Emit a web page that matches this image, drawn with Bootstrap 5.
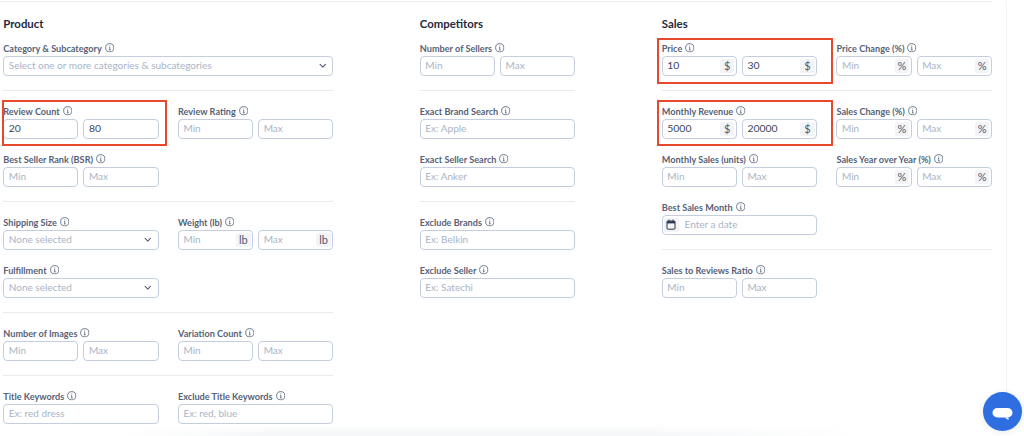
<!doctype html>
<html lang="en"><head><meta charset="utf-8">
<link href="https://cdn.jsdelivr.net/npm/bootstrap@5.3.0/dist/css/bootstrap.min.css" rel="stylesheet">
<style>
html,body{height:436px;overflow:hidden;background:#fff}
body{font-family:Lato,"Liberation Sans",sans-serif;position:relative}
.shell{height:397px;width:1007px;border-right:1px solid #f1f3f6}
.toprule{height:1px;width:992px;background:#edeff3;margin-top:1px}
.cols{padding-left:3.3px;gap:86.5px}
.stack{display:flex;flex-direction:column;gap:14px}
.w-wide{width:330px}.w-narrow{width:155.5px}
.head{font-size:11.4px;font-weight:700;color:#1f2a3d;line-height:11.5px;height:25.5px;padding-top:16.25px;box-sizing:border-box;margin:0}
.rule{height:1px;background:#e7eaef;margin:0;opacity:1;border:0}
.pair{display:flex;gap:19.4px}
.fld{width:155.3px;position:relative}
.fld-full{width:100%}
.lab{display:flex;align-items:center;gap:3px;height:12px;margin-bottom:2.5px;padding-top:1px;font-size:9.15px;font-weight:700;color:#556277;line-height:11px;white-space:nowrap}
.lab svg{width:9.5px;height:9.5px;flex:none}
.two{display:flex;gap:5px}
.box{flex:1 1 0;min-width:0;height:19.5px;border:1px solid #c5cede;border-radius:4px;background:#fff;display:flex;align-items:center;padding:0 1.5px 1px 4.5px;font-size:10px;color:#a9b4c6;line-height:1}
.box .val{color:#39455a;font-size:10.4px}
.box .txt{flex:1}
.unit{width:14.5px;height:14px;margin-bottom:-1px;border-radius:2px;background:#f2f4f7;color:#4d5a70;display:flex;align-items:center;justify-content:center;font-size:11px;flex:none}
.box-sel{padding-right:6px}
.box-date{padding-left:1px}
.box-date .unit{width:15.3px;margin-right:5.5px}
.redmark{position:absolute;border:2px solid #e8492c;pointer-events:none}
.mark-left{left:-1.5px;right:-8.5px;top:-4.5px;bottom:-7px}
.mark-sale-a{left:-4.5px;right:-15.5px;top:-4px;bottom:-8px}
.mark-sale-b{left:-4.5px;right:-15.5px;top:-4.5px;bottom:-7px}
.chat{position:absolute;left:982.5px;top:392px;width:39px;height:39px;border-radius:50%;background:#2f6ee0;display:flex;align-items:center;justify-content:center;box-shadow:0 1px 6px rgba(30,50,90,.12)}
.fadebar{position:absolute;left:120px;width:745px;bottom:0;height:11px;background:linear-gradient(to top,#f3f5f7,rgba(255,255,255,0));-webkit-mask-image:linear-gradient(to right,transparent,#000 20%,#000 70%,transparent);mask-image:linear-gradient(to right,transparent,#000 20%,#000 70%,transparent)}
</style></head><body>
<svg width="0" height="0" class="d-block position-absolute"><defs>
<symbol id="i-info" viewBox="0 0 12 12"><circle cx="6" cy="6" r="5.2" fill="none" stroke="#4d5a70" stroke-width="1"/><path d="M6 3.1v1M5.1 5.4H6v3.2M4.9 8.7h2.3" fill="none" stroke="#4d5a70" stroke-width="1"/></symbol>
<symbol id="i-chev" viewBox="0 0 10 6"><path d="M1 1l4 4 4-4" fill="none" stroke="#39455a" stroke-width="1.4"/></symbol>
</defs></svg>
<div class="shell">
<div class="toprule"></div>
<div class="d-flex cols">
<div class="stack w-wide">
 <div class="head">Product</div>
 <div class="fld fld-full"><div class="lab">Category &amp; Subcategory <svg><use href="#i-info"/></svg></div><div class="box box-sel"><span class="txt">Select one or more categories &amp; subcategories</span><svg width="7.5" height="5"><use href="#i-chev"/></svg></div></div>
 <hr class="rule">
 <div class="pair">
  <div class="fld"><div class="redmark mark-left"></div><div class="lab">Review Count <svg><use href="#i-info"/></svg></div><div class="two"><div class="box"><span class="val">20</span></div><div class="box"><span class="val">80</span></div></div></div>
  <div class="fld"><div class="lab">Review Rating <svg><use href="#i-info"/></svg></div><div class="two"><div class="box">Min</div><div class="box">Max</div></div></div>
 </div>
 <div class="pair">
  <div class="fld"><div class="lab">Best Seller Rank (BSR) <svg><use href="#i-info"/></svg></div><div class="two"><div class="box">Min</div><div class="box">Max</div></div></div>
 </div>
 <hr class="rule">
 <div class="pair">
  <div class="fld"><div class="lab">Shipping Size <svg><use href="#i-info"/></svg></div><div class="box box-sel"><span class="txt">None selected</span><svg width="7.5" height="5"><use href="#i-chev"/></svg></div></div>
  <div class="fld"><div class="lab">Weight (lb) <svg><use href="#i-info"/></svg></div><div class="two"><div class="box"><span class="txt">Min</span><span class="unit">lb</span></div><div class="box"><span class="txt">Max</span><span class="unit">lb</span></div></div></div>
 </div>
 <div class="pair">
  <div class="fld"><div class="lab">Fulfillment <svg><use href="#i-info"/></svg></div><div class="box box-sel"><span class="txt">None selected</span><svg width="7.5" height="5"><use href="#i-chev"/></svg></div></div>
 </div>
 <hr class="rule">
 <div class="pair">
  <div class="fld"><div class="lab">Number of Images <svg><use href="#i-info"/></svg></div><div class="two"><div class="box">Min</div><div class="box">Max</div></div></div>
  <div class="fld"><div class="lab">Variation Count <svg><use href="#i-info"/></svg></div><div class="two"><div class="box">Min</div><div class="box">Max</div></div></div>
 </div>
 <hr class="rule">
 <div class="pair">
  <div class="fld"><div class="lab">Title Keywords <svg><use href="#i-info"/></svg></div><div class="box">Ex: red dress</div></div>
  <div class="fld"><div class="lab">Exclude Title Keywords <svg><use href="#i-info"/></svg></div><div class="box">Ex: red, blue</div></div>
 </div>
</div>
<div class="stack w-narrow">
 <div class="head">Competitors</div>
 <div class="fld fld-full"><div class="lab">Number of Sellers <svg><use href="#i-info"/></svg></div><div class="two"><div class="box">Min</div><div class="box">Max</div></div></div>
 <hr class="rule">
 <div class="fld fld-full"><div class="lab">Exact Brand Search <svg><use href="#i-info"/></svg></div><div class="box">Ex: Apple</div></div>
 <div class="fld fld-full"><div class="lab">Exact Seller Search <svg><use href="#i-info"/></svg></div><div class="box">Ex: Anker</div></div>
 <hr class="rule">
 <div class="fld fld-full"><div class="lab">Exclude Brands <svg><use href="#i-info"/></svg></div><div class="box">Ex: Belkin</div></div>
 <div class="fld fld-full"><div class="lab">Exclude Seller <svg><use href="#i-info"/></svg></div><div class="box">Ex: Satechi</div></div>
</div>
<div class="stack w-wide">
 <div class="head">Sales</div>
 <div class="pair">
  <div class="fld"><div class="redmark mark-sale-a"></div><div class="lab">Price <svg><use href="#i-info"/></svg></div><div class="two"><div class="box"><span class="txt val">10</span><span class="unit">$</span></div><div class="box"><span class="txt val">30</span><span class="unit">$</span></div></div></div>
  <div class="fld"><div class="lab">Price Change (%) <svg><use href="#i-info"/></svg></div><div class="two"><div class="box"><span class="txt">Min</span><span class="unit">%</span></div><div class="box"><span class="txt">Max</span><span class="unit">%</span></div></div></div>
 </div>
 <hr class="rule">
 <div class="pair">
  <div class="fld"><div class="redmark mark-sale-b"></div><div class="lab">Monthly Revenue <svg><use href="#i-info"/></svg></div><div class="two"><div class="box"><span class="txt val">5000</span><span class="unit">$</span></div><div class="box"><span class="txt val">20000</span><span class="unit">$</span></div></div></div>
  <div class="fld"><div class="lab">Sales Change (%) <svg><use href="#i-info"/></svg></div><div class="two"><div class="box"><span class="txt">Min</span><span class="unit">%</span></div><div class="box"><span class="txt">Max</span><span class="unit">%</span></div></div></div>
 </div>
 <div class="pair">
  <div class="fld"><div class="lab">Monthly Sales (units) <svg><use href="#i-info"/></svg></div><div class="two"><div class="box">Min</div><div class="box">Max</div></div></div>
  <div class="fld"><div class="lab">Sales Year over Year (%) <svg><use href="#i-info"/></svg></div><div class="two"><div class="box"><span class="txt">Min</span><span class="unit">%</span></div><div class="box"><span class="txt">Max</span><span class="unit">%</span></div></div></div>
 </div>
 <div class="pair">
  <div class="fld"><div class="lab">Best Sales Month <svg><use href="#i-info"/></svg></div><div class="box box-date"><span class="unit"><svg width="10" height="11" viewBox="0 0 10 11"><rect x="1" y="2" width="8" height="8.2" rx=".8" fill="none" stroke="#2b3648" stroke-width="1"/><path d="M1 2.2h8v2.2H1z" fill="#2b3648"/><path d="M3 .6v2M7 .6v2" stroke="#2b3648" stroke-width="1"/></svg></span>Enter a date</div></div>
 </div>
 <hr class="rule">
 <div class="pair">
  <div class="fld"><div class="lab">Sales to Reviews Ratio <svg><use href="#i-info"/></svg></div><div class="two"><div class="box">Min</div><div class="box">Max</div></div></div>
 </div>
</div>
</div>
</div>
<div class="fadebar"></div>
<div class="chat"><svg width="21" height="17" viewBox="0 0 21 17"><rect x="0.5" y="5" width="20" height="9.4" rx="4.7" fill="#fff"/><path d="M12.5 14.4h4v2.6z" fill="#fff"/></svg></div>
<script src="https://cdn.jsdelivr.net/npm/bootstrap@5.3.0/dist/js/bootstrap.bundle.min.js"></script>
</body></html>
